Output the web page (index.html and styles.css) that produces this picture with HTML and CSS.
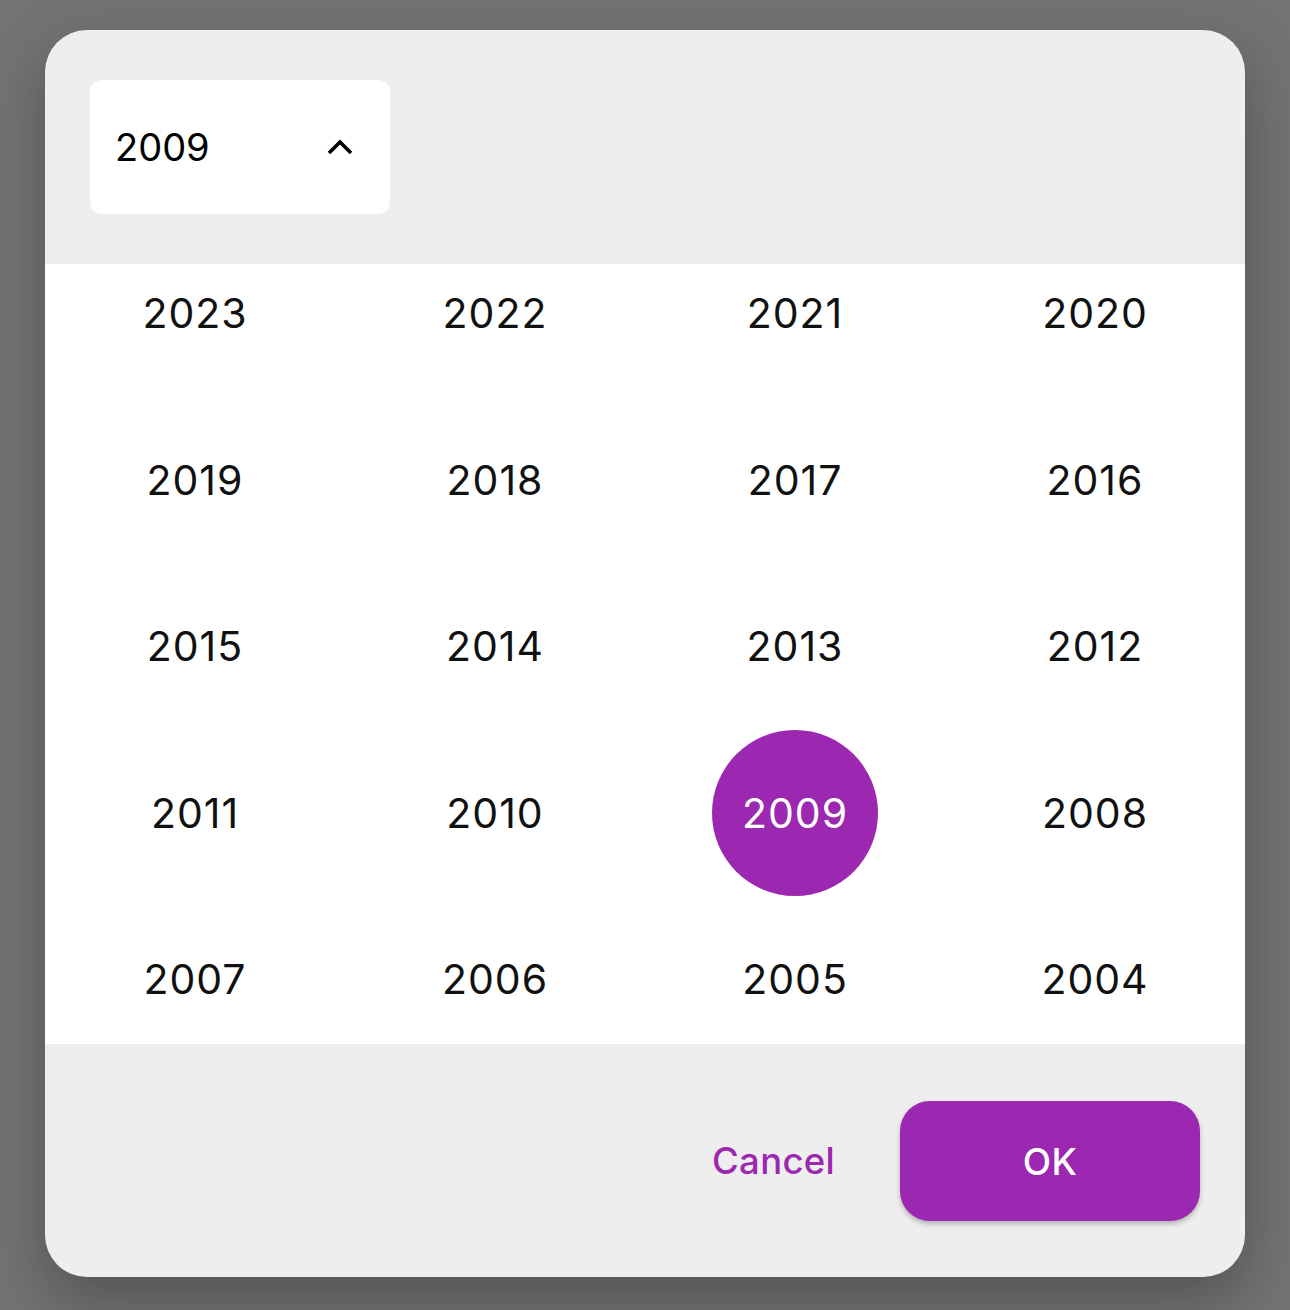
FILE: index.html
```html
<!DOCTYPE html>
<html>
<head>
<meta charset="utf-8">
<link rel="stylesheet" href="styles.css">
</head>
<body>
<div class="dialog">
  <div class="header">
    <div class="year-select">
      <span class="year-select-label">2009</span>
      <svg class="chevron" width="28" height="18" viewBox="0 0 28 18"><polyline points="3,15 14,4 25,15" fill="none" stroke="#000" stroke-width="3.6"/></svg>
    </div>
  </div>
  <div class="years">
    <div class="years-grid">
      <div class="year"><span>2023</span></div>
      <div class="year"><span>2022</span></div>
      <div class="year"><span>2021</span></div>
      <div class="year"><span>2020</span></div>
      <div class="year"><span>2019</span></div>
      <div class="year"><span>2018</span></div>
      <div class="year"><span>2017</span></div>
      <div class="year"><span>2016</span></div>
      <div class="year"><span>2015</span></div>
      <div class="year"><span>2014</span></div>
      <div class="year"><span>2013</span></div>
      <div class="year"><span>2012</span></div>
      <div class="year"><span>2011</span></div>
      <div class="year"><span>2010</span></div>
      <div class="year selected"><span>2009</span></div>
      <div class="year"><span>2008</span></div>
      <div class="year"><span>2007</span></div>
      <div class="year"><span>2006</span></div>
      <div class="year"><span>2005</span></div>
      <div class="year"><span>2004</span></div>
    </div>
  </div>
  <div class="footer">
    <button class="btn-text">Cancel</button>
    <button class="btn-filled">OK</button>
  </div>
</div>
</body>
</html>
```

FILE: styles.css
```css
html, body {
  margin: 0;
  padding: 0;
}
body {
  background: #737373;
  padding: 30px 45px 0 45px;
  height: 1310px;
  box-sizing: border-box;
  font-family: Inter, "Liberation Sans", sans-serif;
}
.dialog {
  width: 1200px;
  height: 1247px;
  background: #eeeeee;
  border-radius: 42px;
  overflow: hidden;
  display: flex;
  flex-direction: column;
  box-shadow: 0 24px 60px rgba(0, 0, 0, 0.28);
}
.header {
  height: 234px;
  padding: 50px 45px 0 45px;
  box-sizing: border-box;
  flex: none;
}
.year-select {
  width: 300px;
  height: 134px;
  background: #ffffff;
  border-radius: 12px;
  display: flex;
  align-items: center;
  justify-content: space-between;
  padding: 0 36px 0 25px;
  box-sizing: border-box;
}
.year-select-label {
  font-size: 38px;
  letter-spacing: 0;
  color: #000;
}
.chevron {
  display: block;
}
.years {
  height: 780px;
  background: #ffffff;
  overflow: hidden;
  flex: none;
}
.years-grid {
  display: grid;
  grid-template-columns: repeat(4, 1fr);
  grid-auto-rows: 166.5px;
  margin-top: -34px;
}
.year {
  display: flex;
  align-items: center;
  justify-content: center;
}
.year span {
  width: 166px;
  height: 166px;
  border-radius: 50%;
  display: flex;
  align-items: center;
  justify-content: center;
  font-size: 41px;
  letter-spacing: 1px;
  color: #111;
}
.year.selected span {
  background: #9c27b0;
  color: #ffffff;
}
.footer {
  flex: 1;
  display: flex;
  justify-content: flex-end;
  align-items: flex-start;
  padding: 57px 45px 0 0;
  box-sizing: border-box;
}
.btn-text {
  border: none;
  background: transparent;
  color: #9c27b0;
  font-family: Inter, "Liberation Sans", sans-serif;
  font-size: 36.5px;
  font-weight: 500;
  letter-spacing: 0.3px;
  height: 120px;
  padding: 0 36px;
  margin-right: 29px;
}
.btn-filled {
  border: none;
  background: #9c27b0;
  color: #ffffff;
  font-family: Inter, "Liberation Sans", sans-serif;
  font-size: 37px;
  font-weight: 500;
  letter-spacing: 0.3px;
  width: 300px;
  height: 120px;
  border-radius: 30px;
  box-shadow: 0 3px 5px rgba(0, 0, 0, 0.25);
}
```
